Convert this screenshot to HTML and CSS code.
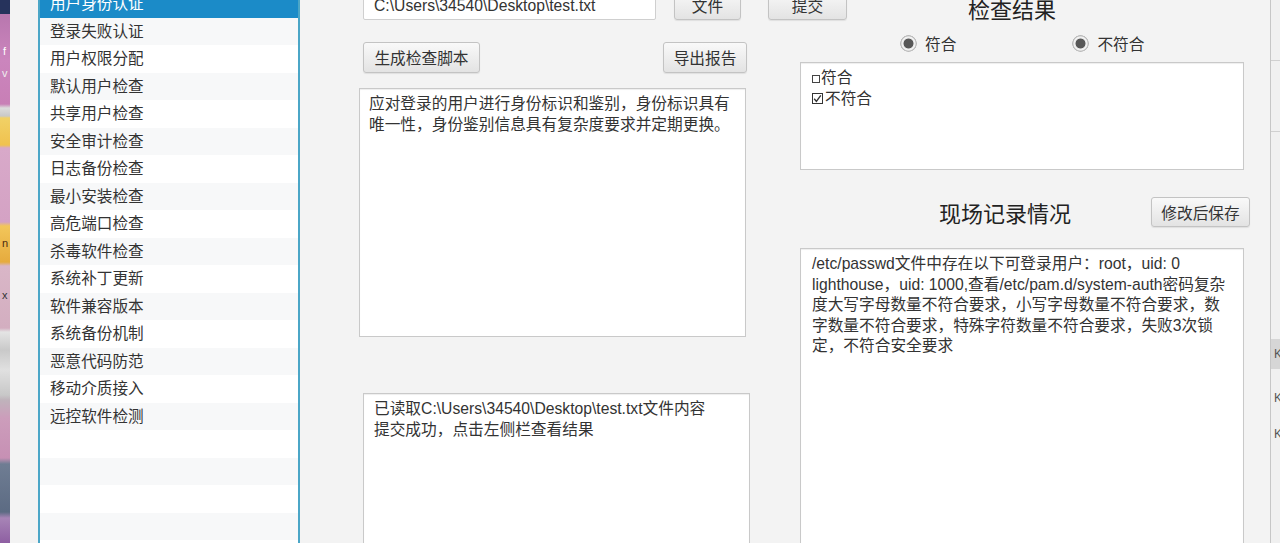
FILE: index.html
```html
<!DOCTYPE html>
<html lang="zh-CN">
<head>
<meta charset="utf-8">
<title>检查工具</title>
<link rel="stylesheet" href="styles.css">
</head>
<body>
  <div class="desk">
    <span class="dl dl-f">f</span>
    <span class="dl dl-ov">v</span>
    <span class="dl dl-n">n</span>
    <span class="dl dl-x">x</span>
  </div>

  <div class="sidebar">
    <div class="item sel">用户身份认证</div>
    <div class="item">登录失败认证</div>
    <div class="item">用户权限分配</div>
    <div class="item">默认用户检查</div>
    <div class="item">共享用户检查</div>
    <div class="item">安全审计检查</div>
    <div class="item">日志备份检查</div>
    <div class="item">最小安装检查</div>
    <div class="item">高危端口检查</div>
    <div class="item">杀毒软件检查</div>
    <div class="item">系统补丁更新</div>
    <div class="item">软件兼容版本</div>
    <div class="item">系统备份机制</div>
    <div class="item">恶意代码防范</div>
    <div class="item">移动介质接入</div>
    <div class="item">远控软件检测</div>
    <div class="item"></div>
    <div class="item"></div>
    <div class="item"></div>
    <div class="item"></div>
    <div class="item"></div>
  </div>

  <div class="mid">
    <div class="toprow">
      <div class="path">C:\Users\34540\Desktop\test.txt</div>
      <div class="btn b-file">文件</div>
      <div class="btn b-submit">提交</div>
    </div>
    <div class="row2">
      <div class="btn b-gen">生成检查脚本</div>
      <div class="btn b-export">导出报告</div>
    </div>
    <div class="box desc">应对登录的用户进行身份标识和鉴别，身份标识具有<br>唯一性，身份鉴别信息具有复杂度要求并定期更换。</div>
    <div class="box log">已读取C:\Users\34540\Desktop\test.txt文件内容<br>提交成功，点击左侧栏查看结果</div>
  </div>

  <div class="right">
    <div class="h h-result">检查结果</div>
    <div class="radios">
      <span class="radio"></span><span class="rlabel">符合</span>
      <span class="radio r2"></span><span class="rlabel">不符合</span>
    </div>
    <div class="box checks">
      <div class="chk"><span class="cb-empty"></span>符合</div>
      <div class="chk"><svg class="cb-on" width="11" height="11" viewBox="0 0 11 11"><rect x="0.5" y="0.5" width="10" height="10" fill="#fff" stroke="#333"/><path d="M2.2 5.8 L4.4 8.4 L8.8 2.4" fill="none" stroke="#333" stroke-width="1.4"/></svg>不符合</div>
    </div>
    <div class="rec-head">
      <div class="h h-rec">现场记录情况</div>
      <div class="btn b-save">修改后保存</div>
    </div>
    <div class="box rec">/etc/passwd文件中存在以下可登录用户：root，uid: 0<br>lighthouse，uid: 1000,查看/etc/pam.d/system-auth密码复杂<br>度大写字母数量不符合要求，小写字母数量不符合要求，数<br>字数量不符合要求，特殊字符数量不符合要求，失败3次锁<br>定，不符合安全要求</div>
  </div>

  <div class="edge">
    <div class="e-line e1"></div>
    <div class="e-line e2"></div>
    <div class="e-blk">K</div>
    <div class="e-k">K</div>
    <div class="e-k">K</div>
  </div>
</body>
</html>
```

FILE: styles.css
```css
html, body {
  margin: 0;
  padding: 0;
  overflow: hidden;
}

body {
  width: 1280px;
  height: 543px;
  background: #f3f3f3;
  font-family: "Liberation Sans", "Noto Sans CJK SC", sans-serif;
  color: #333;
  display: flex;
  align-items: flex-start;
}

/* desktop strip at left edge */
.desk {
  width: 10px;
  height: 543px;
  flex-shrink: 0;
  position: relative;
  overflow: hidden;
  background: linear-gradient(180deg,
    #26335c 0 14px,
    #b877ae 14px, #cb85bd 60px, #c87fb6 104px,
    #dcdcdc 108px, #c9c9c9 116px,
    #f1d166 118px, #f0c24f 145px,
    #d8a9c9 148px, #d4a2c4 222px,
    #f2c65a 226px, #e6ab3e 262px,
    #d9b6c7 266px, #d3aec0 328px,
    #e4e4e4 332px, #c9c9c9 350px, #e0e0e0 370px, #c8c8c8 395px,
    #bfb3bb 400px, #cc9dbb 418px, #c790b4 458px,
    #6f7d93 464px, #5c6b83 512px,
    #a784b6 518px, #8e5fa2 543px);
}

.dl {
  position: absolute;
  font-size: 11px;
  line-height: 12px;
  color: #fff;
}
.dl-f { left: 3px; top: 45px; }
.dl-ov { left: 2px; top: 67px; color: #eee; }
.dl-n { left: 2px; top: 237px; color: #4a2a10; }
.dl-x { left: 2px; top: 289px; color: #333; }

/* left list */
.sidebar {
  margin-left: 28px;
  margin-top: -10px;
  width: 258px;
  height: 620px;
  flex-shrink: 0;
  background: #fff;
  border-left: 2px solid #4ba6c7;
  border-right: 2px solid #4ba6c7;
}

.item {
  height: 27.5px;
  line-height: 27.5px;
  padding-left: 10px;
  font-size: 15.6px;
  color: #333;
  white-space: nowrap;
}

.item:nth-child(even) {
  background: #f7f8f9;
}

.item.sel {
  background: #1b8bc8;
  color: #fff;
}

/* middle column */
.mid {
  margin-left: 59px;
  margin-top: -10px;
  width: 391px;
  flex-shrink: 0;
  display: flex;
  flex-direction: column;
}

.toprow {
  display: flex;
  height: 30px;
  padding-left: 4px;
}

.path {
  width: 293px;
  flex-shrink: 0;
  box-sizing: border-box;
  border: 1px solid #cfcfcf;
  border-radius: 2px;
  background: #fff;
  padding-left: 10px;
  padding-top: 6px;
  line-height: 18px;
  font-size: 15.7px;
  color: #333;
  white-space: nowrap;
}

.btn {
  box-sizing: border-box;
  border: 1px solid #c3c3c3;
  border-radius: 3px;
  background: linear-gradient(#f9f9f9, #e3e3e3);
  box-shadow: 0 1px 1px rgba(0, 0, 0, 0.08);
  font-size: 15.7px;
  color: #333;
  display: flex;
  align-items: center;
  justify-content: center;
  flex-shrink: 0;
  white-space: nowrap;
}

.b-file { width: 67px; margin-left: 18px; }
.b-submit { width: 79px; margin-left: 27px; }

.row2 {
  display: flex;
  justify-content: space-between;
  margin-top: 22px;
  padding: 0 3px 0 4px;
  height: 31px;
}

.b-gen { width: 117px; }
.b-export { width: 84px; }

.box {
  background: #fff;
  border: 1px solid #c9c9c9;
  box-sizing: border-box;
  font-size: 15.7px;
  line-height: 21px;
  color: #333;
  white-space: nowrap;
  box-shadow: inset 0 1px 1px rgba(0, 0, 0, 0.07);
}

.desc {
  margin-top: 15px;
  width: 387px;
  height: 249px;
  padding: 4px 9px;
}

.log {
  margin-top: 56px;
  margin-left: 4px;
  width: 387px;
  height: 200px;
  padding: 4px 10px;
}

/* right column */
.right {
  margin-left: 50px;
  margin-top: -7px;
  width: 450px;
  flex-shrink: 0;
  display: flex;
  flex-direction: column;
}

.h {
  font-size: 22px;
  color: #222;
  font-family: "Noto Sans CJK SC", sans-serif;
}

.h-result {
  height: 30px;
  line-height: 30px;
  text-align: center;
  padding-right: 26px;
}

.radios {
  display: flex;
  align-items: center;
  height: 22px;
  margin-top: 9px;
  padding-left: 100px;
  font-size: 15.7px;
  color: #333;
}

.radio {
  width: 17px;
  height: 17px;
  border-radius: 50%;
  flex-shrink: 0;
  background: radial-gradient(circle, #585858 0 4.6px, #e6e6e6 5.3px, #f7f7f7 6.6px, #c2c2c2 7.4px, #b5b5b5 8.2px, rgba(181, 181, 181, 0) 8.6px);
}

.rlabel { margin-left: 8px; }
.r2 { margin-left: 116px; }

.checks {
  margin-top: 8px;
  width: 444px;
  height: 108px;
  padding: 4px 11px;
}

.chk {
  display: flex;
  align-items: center;
  height: 21px;
}

.cb-empty {
  width: 6px;
  height: 6px;
  border: 1px solid #444;
  margin-right: 1px;
  margin-top: 2px;
  background: #fff;
}

.cb-on {
  margin-right: 2px;
}

.rec-head {
  display: flex;
  justify-content: flex-end;
  align-items: center;
  margin-top: 27px;
  height: 30px;
}

.h-rec {
  margin-right: 80px;
  line-height: 30px;
}

.b-save {
  width: 99px;
  height: 30px;
}

.rec {
  margin-top: 21px;
  width: 444px;
  height: 330px;
  padding: 5px 11px;
  line-height: 20.6px;
}

/* neighbouring window at right edge */
.edge {
  margin-left: 20px;
  width: 9px;
  height: 543px;
  flex-shrink: 0;
  border-left: 1px solid #c6c6c6;
  background: #f0f0f0;
  display: flex;
  flex-direction: column;
  overflow: hidden;
  font-size: 12px;
  color: #555;
}

.e-line {
  height: 1px;
  background: #d0d0d0;
}
.e1 { margin-top: 60px; }
.e2 { margin-top: 70px; }

.e-blk {
  margin-top: 207px;
  height: 30px;
  line-height: 30px;
  background: #d6d6d6;
  padding-left: 3px;
}

.e-k {
  margin-top: 22px;
  line-height: 14px;
  padding-left: 3px;
}
```
